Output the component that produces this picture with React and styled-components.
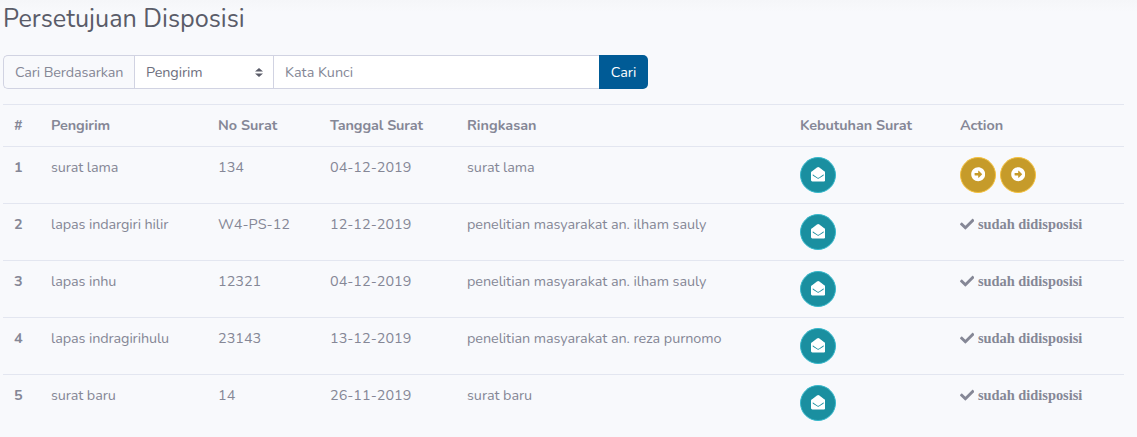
import React from "react";
import styled, { createGlobalStyle } from "styled-components";
import { FaEnvelopeOpen, FaArrowAltCircleRight, FaCheck } from "react-icons/fa";

const GlobalStyle = createGlobalStyle`
  *, *::before, *::after { box-sizing: border-box; }
  body {
    margin: 0;
    height: 437px;
    overflow: hidden;
    background: #f8f9fc;
    color: #858796;
    font-family: Nunito, Lato, "Open Sans", sans-serif;
    font-size: 14.4px;
    line-height: 21.6px;
  }
`;

const Page = styled.main`
  height: 437px;
  padding: 0 13px 0 3px;
  overflow: hidden;
  background: linear-gradient(#f5f6f9, #f8f9fc 12px);
`;

const Title = styled.h1`
  margin: 0 0 21px;
  padding-top: 4px;
  height: 34px;
  color: #5a5c69;
  font-size: 25.2px;
  font-weight: 400;
  line-height: 31px;
`;

const Track = styled.span`
  letter-spacing: ${(p) => p.$by || 0}px;
  white-space: nowrap;
`;

const SearchGroup = styled.div`
  display: flex;
  width: 645px;
  height: 34px;
  margin-bottom: 15px;
`;

const GroupLabel = styled.label`
  display: flex;
  align-items: center;
  width: 131px;
  padding: 1px 0 0 11px;
  border: 1px solid #d1d3e2;
  border-right: 0;
  border-radius: 5px 0 0 5px;
`;

const SelectBox = styled.div`
  display: flex;
  align-items: center;
  justify-content: space-between;
  width: 139px;
  padding: 1px 10px 0 11px;
  border: 1px solid #d1d3e2;
  border-right: 0;
  background: #fff;
  color: #6e707e;
`;

const KeywordBox = styled.div`
  display: flex;
  align-items: center;
  flex: 1;
  padding: 1px 0 0 11px;
  border: 1px solid #d1d3e2;
  border-right: 0;
  background: #fff;
`;

const SearchButton = styled.button`
  width: 49px;
  padding: 1px 0 0;
  border: 0;
  border-radius: 0 5px 5px 0;
  background: #005b96;
  color: #fff;
  font: inherit;
`;

const Table = styled.table`
  width: 1121px;
  table-layout: fixed;
  border-collapse: separate;
  border-spacing: 0;
`;

const Col = styled.col`
  width: ${(p) => p.$w}px;
`;

const HeadCell = styled.th`
  height: 42px;
  padding: 0 0 0 11px;
  border-top: 1px solid #e3e6f0;
  text-align: left;
  font-weight: 700;
`;

const Row = styled.tr`
  height: 57px;
`;

const Cell = styled.td`
  padding: 10px 0 0 11px;
  border-top: 1px solid #e3e6f0;
  vertical-align: top;
  font-weight: ${(p) => (p.$bold ? 700 : 400)};
`;

const Actions = styled.div`
  display: flex;
  gap: 4px;
`;

const CircleButton = styled.button`
  display: flex;
  align-items: center;
  justify-content: center;
  width: 36px;
  height: 36px;
  padding: 0 0 1px;
  border: 1px solid ${(p) => (p.$warning ? "#f6c23e" : "#36b9cc")};
  border-radius: 50%;
  background: ${(p) => (p.$warning ? "#c69b2a" : "#1a8fa0")};
  color: #fff;
  font-size: 14.4px;
`;

const Done = styled.div`
  display: flex;
  align-items: center;
  gap: 3.5px;
  font-family: "Liberation Serif", serif;
  font-weight: 700;
  font-size: 14.4px;

  svg {
    margin-bottom: 2px;
  }
`;

const columns = [
  { label: "#", w: 37 },
  { label: "Pengirim", w: 167, track: -0.05 },
  { label: "No Surat", w: 112 },
  { label: "Tanggal Surat", w: 137, track: -0.09 },
  { label: "Ringkasan", w: 333 },
  { label: "Kebutuhan Surat", w: 160, track: -0.07 },
  { label: "Action", w: 175, track: -0.1 },
];

const letters = [
  { sender: "surat lama", no: "134", date: "04-12-2019", summary: "surat lama", pending: true },
  { sender: "lapas indargiri hilir", no: "W4-PS-12", date: "12-12-2019", summary: "penelitian masyarakat an. ilham sauly" },
  { sender: "lapas inhu", no: "12321", date: "04-12-2019", summary: "penelitian masyarakat an. ilham sauly" },
  { sender: "lapas indragirihulu", no: "23143", date: "13-12-2019", summary: "penelitian masyarakat an. reza purnomo" },
  { sender: "surat baru", no: "14", date: "26-11-2019", summary: "surat baru" },
];

function SelectArrows() {
  return (
    <svg width="8" height="9" viewBox="0 0 4 5" preserveAspectRatio="none" fill="#5a5c69">
      <path d="M2 0L0 2h4zm0 5L0 3h4z" />
    </svg>
  );
}

export default function App() {
  return (
    <>
      <GlobalStyle />
      <Page>
        <Title><Track>Persetujuan Disposisi</Track></Title>
        <SearchGroup>
          <GroupLabel><Track $by={-0.13}>Cari Berdasarkan</Track></GroupLabel>
          <SelectBox><Track $by={-0.1}>Pengirim</Track><SelectArrows /></SelectBox>
          <KeywordBox><Track>Kata Kunci</Track></KeywordBox>
          <SearchButton><Track>Cari</Track></SearchButton>
        </SearchGroup>
        <Table>
          <colgroup>{columns.map((c) => <Col key={c.label} $w={c.w} />)}</colgroup>
          <thead>
            <tr>{columns.map((c) => <HeadCell key={c.label}><Track $by={c.track}>{c.label}</Track></HeadCell>)}</tr>
          </thead>
          <tbody>
            {letters.map((l, i) => (
              <Row key={i}>
                <Cell $bold>{i + 1}</Cell>
                <Cell><Track $by={-0.1}>{l.sender}</Track></Cell>
                <Cell><Track>{l.no}</Track></Cell>
                <Cell><Track>{l.date}</Track></Cell>
                <Cell><Track $by={-0.06}>{l.summary}</Track></Cell>
                <Cell><CircleButton><FaEnvelopeOpen /></CircleButton></Cell>
                <Cell>
                  {l.pending ? (
                    <Actions>
                      <CircleButton $warning><FaArrowAltCircleRight /></CircleButton>
                      <CircleButton $warning><FaArrowAltCircleRight /></CircleButton>
                    </Actions>
                  ) : (
                    <Done><FaCheck />sudah didisposisi</Done>
                  )}
                </Cell>
              </Row>
            ))}
          </tbody>
        </Table>
      </Page>
    </>
  );
}
